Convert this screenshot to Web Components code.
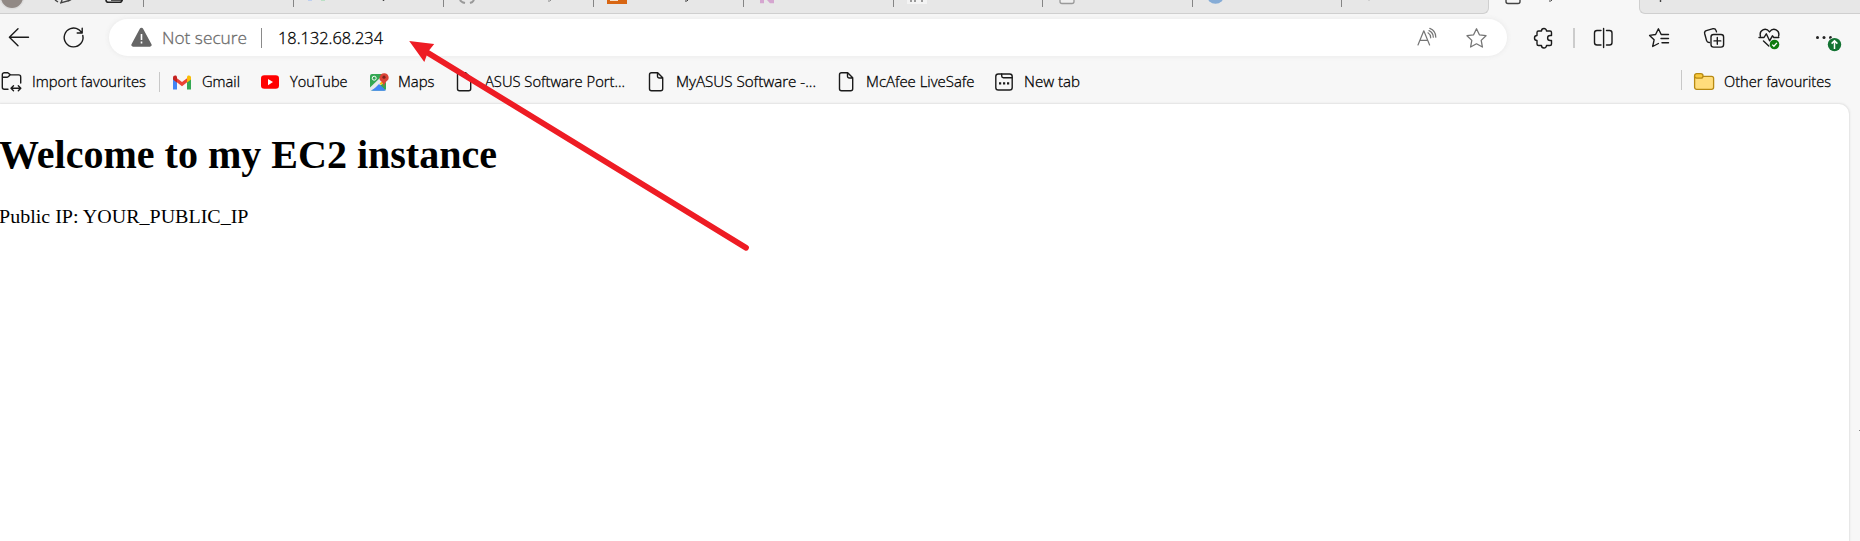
<!DOCTYPE html>
<html lang="en"><head><meta charset="utf-8"><title>My EC2</title>
<style>html,body{margin:0;height:541px;overflow:hidden;background:#f7f7f7}</style></head><body>
<browser-window></browser-window>
<script>
const make=(el,html)=>{const r=el.attachShadow({mode:'open'});r.innerHTML=html;return r};

/* Text squeezed or stretched to a given line width */
customElements.define('fit-text',class extends HTMLElement{
  connectedCallback(){
    if(this.shadowRoot)return;
    const w=+this.getAttribute('w');
    const r=make(this,`<style>:host{display:block;width:${w}px;white-space:nowrap;flex:none}
      span{display:inline-block;transform-origin:0 50%}</style><span><slot></slot></span>`);
    const s=r.querySelector('span');
    const n=s.getBoundingClientRect().width;
    if(n)s.style.transform=`scaleX(${w/n})`;
  }});

const L='fill="none" stroke="#1b1b1b" stroke-width="1.4" stroke-linecap="round" stroke-linejoin="round"';
const G='fill="none" stroke="#757575" stroke-width="1.3" stroke-linecap="round" stroke-linejoin="round"';
const doc=`<path ${L} d="M6.5 2.7h6.2l5 5v11a2 2 0 0 1-2 2h-9.2a2 2 0 0 1-2-2v-14a2 2 0 0 1 2-2zM12.5 3v3.2a1.8 1.8 0 0 0 1.8 1.8h3.2"/>`;
const ICONS={
 back:['7 26 24 24',`<path ${L} d="M28.5 37.3H9.7M18 28.8l-8.6 8.5 8.6 8.5"/>`],
 reload:['61 26 24 24',`<path ${L} d="M82.8 35.5A9.4 9.4 0 1 1 78.7 29.6L82 32.7M82.2 28.3v4.7h-5"/>`],
 warn:['129 26 24 24',`<path fill="#666" d="M139.8 28.8a1.8 1.8 0 0 1 3.3 0l8.4 15.4a1.7 1.7 0 0 1-1.5 2.5h-17a1.7 1.7 0 0 1-1.5-2.5z"/><path stroke="#fff" stroke-width="1.6" d="M141.5 34v6M141.5 41.6v1.9"/>`],
 read:['1415 26 24 24',`<path fill="none" stroke="#757575" stroke-width="1.2" stroke-linecap="round" stroke-linejoin="round" d="M1418 45l5.800-14.200L1429.600 45M1420 40.400h7.800M1428 32.800q2.600 1.600 2.700 5M1429.800 28.400q6 2.300 6 8.800M1429 30.600q4.200 2 4.300 6.600"/>`],
 star:['1464 26 24 24',`<path ${G} d="M1476.500 28.800l2.900 6 6.600.9-4.800 4.700 1.200 6.600-5.900-3.200-5.900 3.200 1.200-6.600-4.800-4.700 6.600-.9z"/>`],
 puzzle:['1531 26 24 24',`<path ${L} d="M1538.500 31h3a2.500 2.500 0 1 1 5 0h3.500a1.500 1.500 0 0 1 1.500 1.500v3h-1.400a2.500 2.500 0 0 0 0 5h1.400v3.500a1.500 1.500 0 0 1-1.500 1.500h-3.500a2.500 2.500 0 0 1-5 0h-3a1.500 1.500 0 0 1-1.500-1.500v-3.500a2.500 2.500 0 1 1 0-5v-3a1.500 1.500 0 0 1 1.500-1.500z"/>`],
 split:['1591 26 24 24',`<path ${L} d="M1601 30.500h-4a2.500 2.500 0 0 0-2.500 2.500v9.500a2.500 2.500 0 0 0 2.500 2.500h4M1606.500 30.500h3a2.500 2.500 0 0 1 2.500 2.500v9.500a2.500 2.500 0 0 1-2.500 2.500h-3M1603.600 28.500v19"/>`],
 favs:['1647 26 24 24',`<path ${L} d="M1664 34.500h-2.800l-2.800-5.700-2.800 5.700-6 .9 4.500 4.400-1.400 6.700 5.700-3M1661 38.500h7.500M1662 42.800h6.500M1664 34.500h4.500"/>`],
 coll:['1702 26 24 24',`<path ${L} d="M1709.500 42.500q-2.300.2-2.900-1.900l-1.900-6.900q-.6-2.400 1.600-3.100l6.800-1.900q2.200-.5 3 1.900l.4 1.300"/><rect ${L} x="1711" y="34.500" width="12.600" height="12.600" rx="2.600"/><path ${L} d="M1717.300 37.500v6.800M1714 40.900h6.800"/>`],
 heart:['1757 26 24 24',`<path ${L} d="M1760.400 36c-1.400-5.500 5.100-9.300 9.100-4.100 4-5.200 10.600-1.400 9.100 4.100M1759 37.500h5l2.300-3.700 3.300 7 2.800-5 1.400 1.700h5M1763.500 41l5.300 5"/><circle cx="1774.500" cy="44.500" r="4.800" fill="#107c10"/><path fill="none" stroke="#fff" stroke-width="1.300" d="M1772.200 44.600l1.700 1.600 3-3.300"/>`],
 more:['1812 26 32 26',`<g fill="#222"><circle cx="1817.500" cy="37.600" r="1.500"/><circle cx="1824" cy="37.600" r="1.500"/><circle cx="1830.500" cy="37.600" r="1.500"/></g><circle cx="1834.500" cy="44.600" r="7.300" fill="#f7f7f7"/><circle cx="1834.500" cy="44.600" r="6.700" fill="#137333"/><path fill="none" stroke="#fff" stroke-width="1.500" d="M1834.500 49v-8.200M1831.600 43.600l2.900-2.900 2.900 2.900"/>`],
 import:['0 0 24 24',`<path ${L} d="M8 19.300H4.300a2 2 0 0 1-2-2V4.700a2 2 0 0 1 2-2h3.500l2.700 2.200h8.200a2 2 0 0 1 2 2V13M2.300 7.300h4.500q1 0 1.700-.9l1.500-1.500M11.500 18.300h9M13.500 15.800l-2.500 2.500 2.500 2.500M18.300 15.800l2.500 2.500-2.500 2.500"/>`],
 gmail:['0 0 24 24',`<path fill="#4285f4" d="M3 7v12.500h4V10z"/><path fill="#34a853" d="M17 10v9.500h4V7z"/><path fill="#ea4335" d="M4 6l8 6 8-6v4l-8 6.300L4 10z"/><path fill="#c5221f" d="M3 7.500Q3 5 6 5.500l1 1v6l-4-3z"/><path fill="#fbbc04" d="M21 7.500q0-2.500-3-2l-1 1v6l4-3z"/>`],
 youtube:['0 0 24 24',`<rect x="3" y="5.300" width="18" height="13.500" rx="3.300" fill="#f00"/><path fill="#fff" d="M10 9v6.200l5-3.100z"/>`],
 maps:['0 0 24 24',`<rect x="3" y="4" width="16" height="16.500" rx="2" fill="#34a853"/><path fill="#4285f4" d="M4 20.500L11 13l7 7.500z"/><path fill="#e8eaed" d="M3 17.500L16 5l3 2v5L4 20.500H3z"/><path fill="#fbbc04" d="M12.500 13.500L19 8v3l-5 4z"/><path fill="#4285f4" d="M5.500 20.500L12 14l7 6.500z"/><circle cx="7.200" cy="8.200" r="2" fill="none" stroke="#fff" stroke-width="1"/><path fill="#db4437" d="M17 17q-.2-3-2.300-5.200A4.600 4.600 0 0 1 17 3.300a4.300 4.300 0 0 1 2.500 8Q17.300 13.500 17 17z"/><circle cx="17" cy="7.200" r="1.600" fill="#7b231e"/>`],
 doc:['0 0 24 24',doc],
 newtab:['0 0 24 24',`<rect ${L} x="3.800" y="4" width="16.400" height="16" rx="2.600"/><path ${L} d="M9.700 4v2a1.700 1.700 0 0 0 1.700 1.700H20"/><path fill="#1b1b1b" d="M7 12.300h2.200v2.200H7zM11 12.300h2.200v2.200H11zM15 12.300h2.200v2.200H15z"/>`],
 folder:['0 0 24 24',`<path d="M2.600 7.500h17a2 2 0 0 1 2 2v9a2 2 0 0 1-2 2h-15a2 2 0 0 1-2-2z" transform="translate(0 -1.200)" fill="#ffdd7c" stroke="#b88a12" stroke-width="1.300"/><path d="M2.600 7.500V5.700a2 2 0 0 1 2-2h4.200a2 2 0 0 1 0 4.400H4.600a2 2 0 0 1-2-2z" fill="#f8c93c" stroke="#b88a12" stroke-width="1.300"/>`]
};
customElements.define('ui-icon',class extends HTMLElement{
  connectedCallback(){
    if(this.shadowRoot)return;
    const [vb,body]=ICONS[this.getAttribute('name')],[,,w,h]=vb.split(' ');
    make(this,`<style>:host{display:block;flex:none;width:${w}px;height:${h}px}svg{display:block}</style><svg width="${w}" height="${h}" viewBox="${vb}">${body}</svg>`);
  }});

customElements.define('fav-item',class extends HTMLElement{
  connectedCallback(){
    if(this.shadowRoot)return;
    const a=n=>this.getAttribute(n);
    make(this,`<style>:host{display:flex;align-items:center;flex:none;gap:${a('gap')||8}px;margin-left:${a('ml')||0}px}fit-text{margin-bottom:2px}</style>
    <ui-icon name="${a('icon')}"></ui-icon><fit-text w="${a('w')}">${a('label')}</fit-text>`);
  }});

/* Lower edge of the tab row: favicons are cut off by the top of the window */
const TABS=[
 [0,144,`<circle cx="12" cy="-3" r="12.500" fill="#dcdcdc"/><circle cx="12" cy="-3" r="11" fill="#918985"/><path d="M55 0l3 2M60 3.200l9-2.700M61 3l1-3M68 1l3-1.500" fill="none" stroke="#444" stroke-width="1.400"/><path d="M106 0q0 2.300 2.500 2.300h11q2.500 0 2.500-2.300M111 0h12" fill="none" stroke="#222" stroke-width="1.600"/>`],
 [144,150,``],
 [294,150,`<path d="M308 .4h4" stroke="#b9ccf0"/><path d="M321 .4h4" stroke="#b5dfc1"/><path d="M383.500 0v1" stroke="#444" stroke-width="1.500"/>`],
 [444,150,`<path d="M460 0q1 2 5 3M474 0q-1 2-4 3" fill="none" stroke="#999" stroke-width="2"/><path d="M548 1q2 .8 3.500-1.500" fill="none" stroke="#888"/>`],
 [594,150,`<rect x="607" y="-8" width="20" height="12" fill="#d86613"/><path d="M610 .5h8" stroke="#f7dfc8"/><path d="M685 1q2 .8 3.500-1.500" fill="none" stroke="#333"/>`],
 [744,150,`<path d="M760 0h4v3.300h-4zM767 0l7 0v3.300h-4z" fill="#d5a6d0"/>`],
 [894,149,`<rect x="907" y="-8" width="20" height="12" fill="#f3f3f3"/><path d="M911 0v2M915 0v2M922 0v2" stroke="#999" stroke-width="2"/>`],
 [1043,150,`<rect x="1060" y="-14" width="14" height="17.500" rx="2" fill="#eee" stroke="#999" stroke-width="1.300"/>`],
 [1193,149,`<circle cx="1215.500" cy="-5" r="8.800" fill="#86acd6"/>`],
 [1342,147,`<path d="M1368 .3h2" stroke="#ccc"/>`]];
customElements.define('tab-strip',class extends HTMLElement{
  connectedCallback(){
    const svg=(x,w,b)=>`<svg width="${w}" height="13" viewBox="${x} 0 ${w} 13">${b}</svg>`;
    make(this,`<style>:host{display:flex;height:14px;background:#f7f7f7}
      .grp{display:flex;height:13px;background:#e7e7e7;border-bottom:1px solid #cfcfcf;overflow:hidden}
      .a{width:1489px;border-right:1px solid #cfcfcf;border-radius:0 0 6px 0;box-sizing:border-box;height:14px}
      .b{flex:1;border-left:1px solid #cfcfcf;border-radius:0 0 0 6px}
      .t{position:relative;flex:none;height:13px;display:flex}
      .t::after{content:"";width:1.300px;height:7px;background:#858585;margin-left:-1px}
      .t:last-child::after{display:none}
      svg{display:block;flex:none}.act{width:150px}</style>
      <div class="grp a">${TABS.map(t=>`<div class="t" style="width:${t[1]}px">${svg(...t)}</div>`).join('')}</div>
      <div class="act">${svg(1489,150,`<rect x="1506" y="-14" width="14" height="17.500" rx="2" fill="none" stroke="#444" stroke-width="1.400"/><path d="M1549 1q2 .8 3.500-1.500" fill="none" stroke="#444"/>`)}</div>
      <div class="grp b">${svg(1640,60,`<path d="M1660.500 0v2" stroke="#444" stroke-width="1.400"/>`)}</div>`);
  }});

customElements.define('tool-bar',class extends HTMLElement{
  connectedCallback(){
    make(this,`<style>:host{display:flex;align-items:center;height:47px;padding-left:7px;font:300 17px "Open Sans",sans-serif;-webkit-text-stroke:.3px currentColor}
      .pill{display:flex;align-items:center;box-sizing:border-box;width:1398px;height:37px;margin-left:24px;padding-left:20px;border-radius:19px;background:#fff;box-shadow:0 0 4px 1px #ececec;color:#6b6b6b}
      i{display:block;width:1.500px;height:20px;background:#8a8a8a;flex:none}
      .v{background:#ccc}</style>
    <ui-icon name="back"></ui-icon><ui-icon name="reload" style="margin-left:30px"></ui-icon>
    <div class="pill"><ui-icon name="warn"></ui-icon><fit-text w="85" style="margin-left:8.500px">Not secure</fit-text>
      <i style="margin-left:14px"></i><fit-text w="105" style="margin-left:16px;color:#000">18.132.68.234</fit-text>
      <ui-icon name="read" style="margin-left:auto"></ui-icon><ui-icon name="star" style="margin:0 19px 0 25px"></ui-icon></div>
    <ui-icon name="puzzle" style="margin-left:24px"></ui-icon><i class="v" style="margin-left:18px"></i>
    <ui-icon name="split" style="margin-left:16.500px"></ui-icon><ui-icon name="favs" style="margin-left:32px"></ui-icon>
    <ui-icon name="coll" style="margin-left:31px"></ui-icon><ui-icon name="heart" style="margin-left:31px"></ui-icon>
    <ui-icon name="more" style="margin:2px 0 0 31px"></ui-icon>`);
  }});

customElements.define('favourites-bar',class extends HTMLElement{
  connectedCallback(){
    make(this,`<style>:host{display:flex;align-items:center;height:43px;box-sizing:border-box;padding-bottom:2px;font:300 15px "Open Sans",sans-serif;-webkit-text-stroke:.3px currentColor;color:#000}
      i{display:block;width:1px;height:20px;background:#c8c8c8;flex:none}</style>
    <fav-item icon="import" gap="7.500" w="114" label="Import favourites"></fav-item><i style="margin-left:13.500px"></i>
    <fav-item icon="gmail" ml="10" w="38" label="Gmail"></fav-item>
    <fav-item icon="youtube" ml="18" w="57.500" label="YouTube"></fav-item>
    <fav-item icon="maps" ml="19" gap="7" w="36.500" label="Maps"></fav-item>
    <fav-item icon="doc" ml="19" w="140" label="ASUS Software Port..."></fav-item>
    <fav-item icon="doc" ml="20" gap="7" w="140" label="MyASUS Software -..."></fav-item>
    <fav-item icon="doc" ml="19" gap="7" w="108.500" label="McAfee LiveSafe"></fav-item>
    <fav-item icon="newtab" ml="17.500" w="56" label="New tab"></fav-item>
    <i style="margin:-3px 0 0 auto"></i>
    <fav-item icon="folder" ml="10" w="107" label="Other favourites" style="margin-right:29px"></fav-item>`);
  }});

customElements.define('web-page',class extends HTMLElement{
  connectedCallback(){
    make(this,`<style>:host{display:block;box-sizing:border-box;width:1849px;flex:1;background:#fff;border-radius:0 10px 0 0;box-shadow:0 0 2px 1px #e2e2e2;font:19.200px "Liberation Serif",serif;color:#000}
      h1{font-size:39px;line-height:44px;margin:0 0 0 -1px;padding-top:29px}p{margin:29px 0 0 -1px;line-height:22px}</style>
    <h1><fit-text w="498">Welcome to my EC2 instance</fit-text></h1><p><fit-text w="249.500">Public IP: YOUR_PUBLIC_IP</fit-text></p>`);
  }});

customElements.define('pointer-arrow',class extends HTMLElement{
  connectedCallback(){
    make(this,`<style>:host{position:absolute;left:400px;top:30px;pointer-events:none}svg{display:block}</style>
    <svg width="360" height="230" viewBox="400 30 360 230"><path d="M424 50.500L746 247.800" stroke="#ee1c24" stroke-width="5.800" stroke-linecap="round"/><path fill="#ee1c24" d="M409.200 41L434.200 44l-6 7.500-3.900 10.500z"/></svg>`);
  }});

customElements.define('browser-window',class extends HTMLElement{
  connectedCallback(){
    make(this,`<style>:host{display:flex;flex-direction:column;position:relative;width:1860px;height:541px;overflow:hidden;background:#f7f7f7}
      .sb{position:absolute;left:1859px;top:430px;width:1px;height:1px;background:#888}</style>
    <tab-strip></tab-strip><tool-bar></tool-bar><favourites-bar></favourites-bar><web-page></web-page><pointer-arrow></pointer-arrow><div class="sb"></div>`);
  }});
</script></body></html>
